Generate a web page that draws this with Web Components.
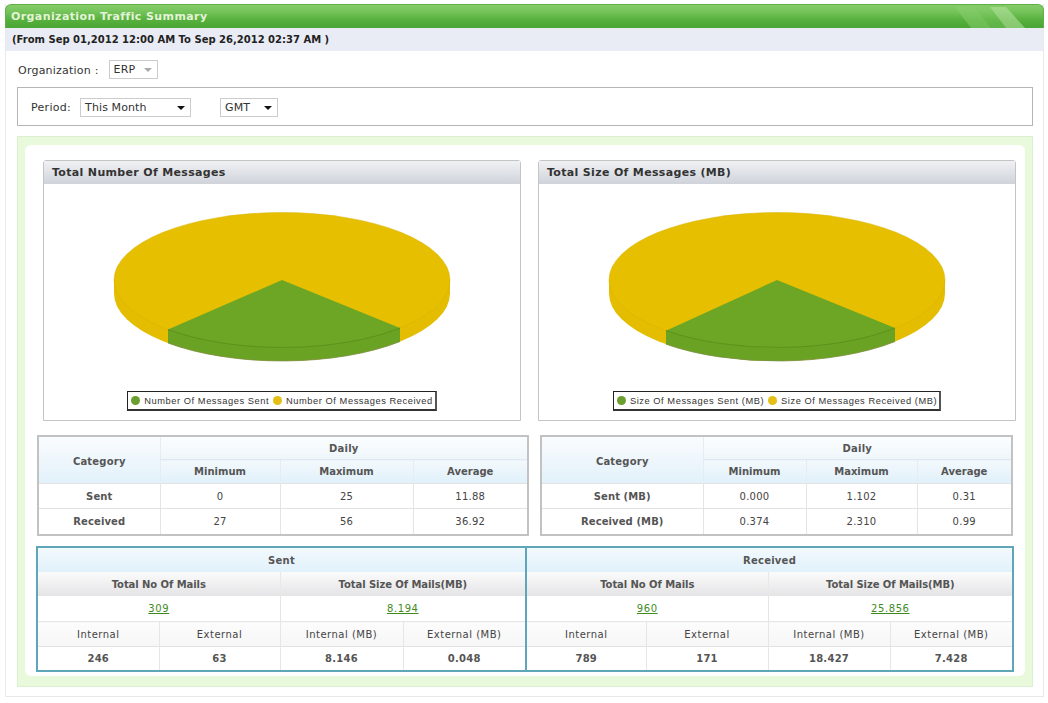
<!DOCTYPE html>
<html><head><meta charset="utf-8"><style>
html,body{margin:0;padding:0;background:#fff}
body{font:11px "DejaVu Sans",sans-serif;color:#444}
</style></head><body>
<report-page></report-page>
<script>
const FONT='"DejaVu Sans",Verdana,sans-serif';
function def(name,css,html){
  customElements.define(name,class extends HTMLElement{
    constructor(){super();const r=this.attachShadow({mode:'open'});
      r.innerHTML='<style>'+css+'</style>'+(typeof html==='function'?html(this):html);}
  });
}
def('title-bar',`:host{display:flex;align-items:center;position:relative;height:24px;margin:0 -1px;box-sizing:border-box;padding-left:5px;border-radius:6px 6px 0 0;border:1px solid #5fb04a;border-bottom:0;
 background:linear-gradient(#86cd68 0,#74c35a 30%,#56b03c 65%,#4aa534 100%);color:#e4f3d8;font:bold 11px ${FONT};letter-spacing:.4px;overflow:hidden}
 svg{position:absolute;right:0;top:0}`,
 `<slot></slot><svg width="90" height="24" viewBox="0 0 90 24"><polygon points="2,2 22,2 38,23 18,23" fill="#8ccf72" opacity=".5"/><polygon points="22,2 37,2 53,23 38,23" fill="#8ccf72" opacity=".3"/><polygon points="37,2 53,2 72,23 53,23" fill="#b9e3a4" opacity=".55"/></svg>`);
def('sub-bar',`:host{display:flex;align-items:center;height:23px;padding-left:6px;background:#eaecf5;color:#222;font:bold 10px ${FONT}}`,`<slot></slot>`);
def('select-box',`:host{display:inline-flex;align-items:center;justify-content:space-between;box-sizing:border-box;height:19px;padding:0 5px 0 4px;border:1px solid #ccc;background:#fff;font:11px ${FONT};color:#333;letter-spacing:.1px}
 i{width:0;height:0;border:4px solid transparent;border-top:4px solid var(--arrow,#111);border-bottom:0;margin-top:1px}`,`<slot></slot><i></i>`);
def('org-row',`:host{display:flex;align-items:center;height:18px;margin:9px 0 0 12px;padding-top:1px;font:11px ${FONT};color:#333;letter-spacing:.22px;gap:10px}`,`<slot></slot>`);
def('period-box',`:host{display:flex;align-items:center;box-sizing:border-box;height:39px;margin:8px 10px 0 11px;padding:1px 0 0 13px;border:1px solid #b5b5b5;font:11px ${FONT};color:#333;letter-spacing:.3px}`,`<slot></slot>`);
def('green-frame',`:host{display:block;box-sizing:border-box;height:551px;margin:10px 10px 0 11px;padding:8px 7px 10px;background:#e9f9dc;border:1px solid #dcefcf}
 div{box-sizing:border-box;height:100%;background:#fff;border-radius:6px;padding:15px 0 0 12px}`,`<div><slot></slot></div>`);
def('chart-row',`:host{display:flex;gap:17px;margin-left:6px}`,`<slot></slot>`);
def('chart-panel',`:host{display:block;box-sizing:border-box;width:478px;height:261px;border:1px solid #c4c4c4;border-radius:3px 3px 0 0}
 h3{margin:0;height:23px;display:flex;align-items:center;padding-left:8px;background:linear-gradient(#f0f1f4,#cfd3da);font:bold 11px ${FONT};color:#333;letter-spacing:.33px}
 .b{display:flex;flex-direction:column;align-items:center}`,
 el=>`<h3>${el.getAttribute('heading')}</h3><div class="b"><slot></slot></div>`);
def('pie-chart',`:host{display:block;height:207px;width:100%}svg{display:block;margin:auto}`,el=>{
 const lx=+el.getAttribute('lx'),ly=+el.getAttribute('ly'),rx=+el.getAttribute('rx'),ry=+el.getAttribute('ry'),d=13.5;
 const arc=`A168 67.5 0 0 0 ${rx} `;
 return `<svg width="476" height="207" viewBox="44 184 476 207">
 <path d="M114 280v${d}a168 67.5 0 0 0 336 0v-${d}z" fill="#e4bd00"/>
 <ellipse cx="282" cy="280" rx="168" ry="67.5" fill="#e6bf00" stroke="#d6b000" stroke-width=".5"/>
 <path d="M${lx} ${ly}V${ly+d}${arc}${ry+d}V${ry}A168 67.5 0 0 1 ${lx} ${ly}Z" fill="#6aa323"/>
 <path d="M${lx} ${ly+d}${arc}${ry+d}" fill="none" stroke="#7c8f4a" stroke-width=".8"/>
 <path d="M282 280L${lx} ${ly}${arc}${ry}Z" fill="#6ca624"/>
 <path d="M${lx} ${ly}${arc}${ry}" fill="none" stroke="#4f8a1e" stroke-width=".8"/>
 </svg>`;});
def('chart-legend',`:host{display:flex;align-items:center;box-sizing:border-box;height:20px;padding:0 2px 0 3px;border:1px solid #222;border-right:2px solid #555;border-bottom:2px solid #333;background:#fff;font:9.3px "Liberation Sans",Arial,sans-serif;color:#333;letter-spacing:.55px;white-space:nowrap}
 i{width:9px;height:9px;border-radius:50%;margin-right:4px;flex:none}.y{margin-left:4px;background:#e6bf15}.g{background:#6a9e2e}`,
 el=>`<i class="g"></i>${el.getAttribute('a')}<i class="y"></i>${el.getAttribute('b')}`);
const tableBase=`table{border-collapse:collapse;table-layout:fixed;width:100%;font:10px ${FONT};color:#444;letter-spacing:.25px}
 td,th{padding:0;text-align:center;overflow:hidden;white-space:nowrap}`;
def('stats-table',`:host{display:block;box-sizing:border-box;height:101px;border:2px solid #c2c2c2;margin-top:14px}
 ${tableBase}
 th{background:linear-gradient(#fafcfe,#e2f1fa);color:#555;font-weight:bold;border-left:1px solid #e6edf2}
 th.c{border-left:0;padding-top:2px;letter-spacing:.2px}
 .top{height:22px;background:linear-gradient(#fbfdfe,#eef6fb);border-bottom:1px solid #dfe8ee}
 .sub{height:23px;background:linear-gradient(#f3f9fc,#e0f0fa);border-left:1px solid #e6edf2;letter-spacing:0}
 td{height:24px;border-left:1px solid #e4e4e4;border-top:1px solid #e2e2e2}
 tr:last-child td{height:25px}
 td:first-child{border-left:0;font-weight:bold;color:#555;letter-spacing:.1px}`,
 el=>{const c=el.getAttribute('cols').split(',');const r=JSON.parse(el.getAttribute('rows'));
 return `<table><colgroup>${c.map(w=>`<col style="width:${w}px">`).join('')}</colgroup>
 <tr><th class="c" rowspan="2">Category</th><th class="top" colspan="3">Daily</th></tr>
 <tr><th class="sub">Minimum</th><th class="sub">Maximum</th><th class="sub">Average</th></tr>
 ${r.map(x=>`<tr>${x.map(v=>`<td>${v}</td>`).join('')}</tr>`).join('')}</table>`;});
def('stats-row',`:host{display:flex;gap:11px;width:976px}`,`<slot></slot>`);
def('summary-table',`:host{box-sizing:border-box;width:978px;height:126px;margin:10px 0 0 -1px;border:2px solid #5fa6b9;display:flex}
 ${tableBase}
 .h{flex:none;box-sizing:border-box}
 .l{border-left:2px solid #5fa6b9}
 .s{height:24px;background:linear-gradient(#f2f9fd,#e1f1fb);font-weight:bold;color:#555}
 .t{height:24px;font-weight:bold;color:#555;background:linear-gradient(#fbfbfb,#e4e4e6);border-left:1px solid #e8e8e8;letter-spacing:-.07px}
 .t.f,.n.f,.v.f{border-left:0}
 .k{height:25px;border-top:0}
 .k td{border-left:1px solid #e4e4e4}
 .k td:first-child{border-left:0}
 a{color:#3f8a1f;text-decoration:underline;letter-spacing:.6px}
 .n{height:24px;background:linear-gradient(#fcfcfc,#f6f6f6);border-top:1px solid #e6e6e6;border-left:1px solid #e6e6e6;letter-spacing:.5px}
 .v{height:23px;font-weight:bold;color:#555;border-top:1px solid #e2e2e2;border-left:1px solid #e6e6e6}`,
 el=>{const D=JSON.parse(el.getAttribute('data'));
 return D.map((d,i)=>`<div class="h ${i?'l':''}" style="width:${d.w}px"><table><colgroup>${d.c.map(w=>`<col style="width:${w}px">`).join('')}</colgroup>
 <tr><th class="s" colspan="4">${d.name}</th></tr>
 <tr><th class="t f" colspan="2">Total No Of Mails</th><th class="t" colspan="2">Total Size Of Mails(MB)</th></tr>
 <tr class="k"><td class="k" colspan="2"><a href="#">${d.n}</a></td><td class="k" colspan="2"><a href="#">${d.s}</a></td></tr>
 <tr><td class="n f">Internal</td><td class="n">External</td><td class="n">Internal (MB)</td><td class="n">External (MB)</td></tr>
 <tr>${d.v.map((v,j)=>`<td class="v ${j?'':'f'}">${v}</td>`).join('')}</tr></table></div>`).join('');});
def('report-page',`:host{display:block;box-sizing:border-box;width:1039px;height:693px;margin:4px 0 0 5px;border:solid #e9e9e9;border-width:0 1px 1px 1px}
 .sel1{width:49px;--arrow:#aaa;margin-top:-2px;padding-top:1px}.sel2{width:111px;margin-left:9px}.sel3{width:58px;margin-left:29px}`,
 `<title-bar>Organization Traffic Summary</title-bar>
 <sub-bar>(From Sep 01,2012 12:00 AM To Sep 26,2012 02:37 AM )</sub-bar>
 <org-row>Organization :<select-box class="sel1">ERP</select-box></org-row>
 <period-box>Period:<select-box class="sel2">This Month</select-box><select-box class="sel3">GMT</select-box></period-box>
 <green-frame>
 <chart-row>
  <chart-panel heading="Total Number Of Messages"><pie-chart lx="168" ly="329.5" rx="400" ry="328.05"></pie-chart><chart-legend a="Number Of Messages Sent" b="Number Of Messages Received"></chart-legend></chart-panel>
  <chart-panel heading="Total Size Of Messages (MB)"><pie-chart lx="171" ly="330.67" rx="400" ry="328.05"></pie-chart><chart-legend a="Size Of Messages Sent (MB)" b="Size Of Messages Received (MB)"></chart-legend></chart-panel>
 </chart-row>
 <stats-row>
  <stats-table style="width:492px" cols="121,120,133,114" rows='[["Sent","0","25","11.88"],["Received","27","56","36.92"]]'></stats-table>
  <stats-table style="width:473px" cols="161,103,111,94" rows='[["Sent (MB)","0.000","1.102","0.31"],["Received (MB)","0.374","2.310","0.99"]]'></stats-table>
 </stats-row>
 <summary-table data='[{"w":487,"name":"Sent","n":"309","s":"8.194","c":[121,121,123,122],"v":["246","63","8.146","0.048"]},{"w":487,"name":"Received","n":"960","s":"25.856","c":[119,122,122,122],"v":["789","171","18.427","7.428"]}]'></summary-table>
 </green-frame>`);
</script></body></html>
